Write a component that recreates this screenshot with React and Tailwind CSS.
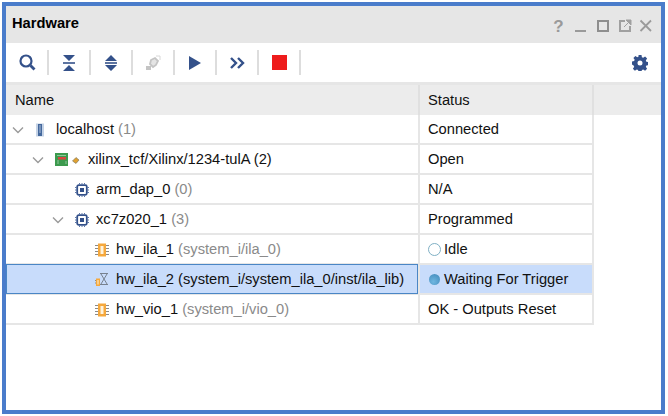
import React from 'react';

const NAVY = '#34518a';

function Chevron() {
  return (
    <svg width="12" height="8" viewBox="0 0 12 8" className="shrink-0">
      <path d="M1 1.500 L6 6.500 L11 1.500" fill="none" stroke="#9a9a9a" strokeWidth="1.400" />
    </svg>
  );
}

function HostIcon() {
  return (
    <svg width="10" height="14" viewBox="0 0 10 14" className="shrink-0">
      <rect x="1" y="0.500" width="8" height="13" fill="#c5d3e6" />
      <rect x="3" y="1" width="4" height="12" fill="#44689c" />
      <path d="M4 3h2M4 5h2M4 7h2M4 9h2" stroke="#c5d3e6" strokeWidth="0.800" />
    </svg>
  );
}

function BoardIcon() {
  return (
    <svg width="26" height="14" viewBox="0 0 26 14" className="shrink-0">
      <rect x="0" y="0" width="13" height="13" fill="#3c9a4e" />
      <path d="M2 2.500h9M11 8v3M3 7v4" fill="none" stroke="#8fc79a" strokeWidth="1" />
      <rect x="3" y="4" width="8" height="2.500" fill="#d8453f" />
      <path d="M21 4.500 L24 7 L21 10.500 L17.500 8 Z" fill="#e0a030" stroke="#6f6f5a" strokeWidth="0.600" />
    </svg>
  );
}

function ChipIcon() {
  return (
    <svg width="14" height="14" viewBox="0 0 14 14" className="shrink-0">
      <rect x="2.200" y="2.200" width="9.600" height="9.600" rx="1.500" fill="none" stroke="#34518a" strokeWidth="1.800" />
      <rect x="5" y="5" width="4" height="4" fill="#34518a" />
      <path d="M4.500 0v2M7 0v2M9.500 0v2M4.500 12v2M7 12v2M9.500 12v2M0 4.500h2M0 7h2M0 9.500h2M12 4.500h2M12 7h2M12 9.500h2" stroke="#5f78a8" strokeWidth="1" />
    </svg>
  );
}

function IlaIcon() {
  return (
    <svg width="14" height="14" viewBox="0 0 14 14" className="shrink-0">
      <path d="M0 2.500h3M0 5.500h3M0 8.500h3M0 11.500h3M11 2.500h3M11 5.500h3M11 8.500h3M11 11.500h3" stroke="#8a8a8a" strokeWidth="1" />
      <rect x="3" y="0.500" width="8" height="13" fill="#f5a83c" />
      <rect x="5.500" y="3" width="3" height="8" fill="#fff3dc" />
    </svg>
  );
}

function HourglassIcon() {
  return (
    <svg width="14" height="15" viewBox="0 0 14 15" className="shrink-0">
      <path d="M5 1.500h8M5 12.500h8M6 2l6 10M12 2L6 12" fill="none" stroke="#77818f" strokeWidth="1" />
      <path d="M0 8.500h1M0 11h1" stroke="#8a8a8a" />
      <rect x="1" y="6.500" width="4" height="7.500" fill="#f5a83c" />
      <rect x="2.500" y="8" width="1" height="4.500" fill="#fff3dc" />
    </svg>
  );
}

function Row({ indent, open, icon, name, note, noteDark, status, statusIcon, selected }) {
  return (
    <div className={`flex w-[588px] h-[30px] border-b-2 border-[#e6e6e6] ${selected ? 'bg-[#c8dcfb]' : ''}`}>
      <div
        className={`w-[412px] shrink-0 flex items-center pt-px ${selected ? 'border border-[#4a86c5] -mt-px h-[30px]' : ''}`}
        style={{ paddingLeft: selected ? indent - 1 : indent }}
      >
        <div className="w-[20px] shrink-0 flex items-center">{open && <Chevron />}</div>
        <div className="w-[24px] shrink-0 flex items-center pl-[3px]">{icon}</div>
        <span className="whitespace-nowrap">
          {name}
          {note && <span className={noteDark ? '' : 'text-[#8a8a8a]'}> {note}</span>}
        </span>
      </div>
      <div className="w-[176px] shrink-0 flex items-center gap-[3px] pl-[8px] pt-px border-x-2 border-[#e6e6e6] whitespace-nowrap">
        {statusIcon}
        {status}
      </div>
    </div>
  );
}

function Sep() {
  return <div className="w-[2px] h-[25px] bg-[#dddddd] shrink-0" />;
}

function ToolButton({ children }) {
  return <div className="w-[40px] h-[25px] flex items-center justify-center shrink-0">{children}</div>;
}

export default function App() {
  return (
    <div className="bg-white w-[668px] h-[416px] pt-[2px] pl-[2px] font-['Liberation_Sans',Arial,sans-serif] text-[14.7px] text-[#111111]">
      <div className="w-[663px] h-[412px] border-4 border-[#4a7ccb] bg-white flex flex-col overflow-hidden">
        <div className="h-[37px] bg-[#e6e6e6] flex items-center justify-between pl-[6px] pr-[8px] shrink-0">
          <span className="font-bold text-[14.7px] text-black -mt-[2px]">Hardware</span>
          <div className="flex items-center gap-[7px] mt-[3px]">
            <span className="font-bold text-[17px] leading-none text-[#9a9a9a] w-[15px] text-center">?</span>
            <svg width="15" height="14" viewBox="0 0 15 14"><path d="M2 12h11" stroke="#9a9a9a" strokeWidth="2" /></svg>
            <svg width="15" height="14" viewBox="0 0 15 14"><rect x="3" y="2" width="10" height="10" fill="none" stroke="#8e8e8e" strokeWidth="2" /></svg>
            <svg width="15" height="14" viewBox="0 0 15 14"><path d="M8 2H3v10h10V7" fill="none" stroke="#a0a0a0" strokeWidth="2" /><path d="M9 1h5v5z M7 8l4-4" fill="#a0a0a0" stroke="#a0a0a0" /></svg>
            <svg width="14" height="14" viewBox="0 0 14 14"><path d="M1.500 1.500l10.500 10.500M12 1.500L1.500 12" stroke="#9a9a9a" strokeWidth="1.800" /></svg>
          </div>
        </div>

        <div className="h-[39px] flex items-center pl-px pr-[13px] shrink-0">
          <ToolButton>
            <svg width="17" height="17" viewBox="0 0 17 17">
              <circle cx="7" cy="7" r="5.500" fill="none" stroke={NAVY} strokeWidth="2.200" />
              <path d="M11.500 11.500l4 4" stroke={NAVY} strokeWidth="2.800" />
            </svg>
          </ToolButton>
          <Sep />
          <ToolButton>
            <svg width="14" height="16" viewBox="0 0 14 16">
              <path d="M1 0h12L7 6z M1 16h12L7 10z" fill={NAVY} />
              <path d="M1 8h12" stroke={NAVY} strokeWidth="1.600" />
            </svg>
          </ToolButton>
          <Sep />
          <ToolButton>
            <svg width="14" height="16" viewBox="0 0 14 16">
              <path d="M7 0l6 6H1z M7 16l-6-6h12z" fill={NAVY} />
              <path d="M1 8h12" stroke={NAVY} strokeWidth="1.600" />
            </svg>
          </ToolButton>
          <Sep />
          <ToolButton>
            <svg width="16" height="16" viewBox="0 0 16 16">
              <path d="M6 5l4-2 3 3-2 4-3 2-3-3z" fill="#e4e4e4" stroke="#c4c4c4" strokeWidth="1.800" />
              <path d="M11 1h4v4" fill="none" stroke="#d8d8d8" strokeWidth="1" />
              <path d="M1 11h5v4H1z" fill="#c4c4c4" />
            </svg>
          </ToolButton>
          <Sep />
          <ToolButton>
            <svg width="12" height="14" viewBox="0 0 12 14"><path d="M0 0l12 7-12 7z" fill={NAVY} /></svg>
          </ToolButton>
          <Sep />
          <ToolButton>
            <svg width="15" height="12" viewBox="0 0 15 12">
              <path d="M1 1l5 5-5 5M8 1l5 5-5 5" fill="none" stroke={NAVY} strokeWidth="2.400" />
            </svg>
          </ToolButton>
          <Sep />
          <ToolButton>
            <div className="w-[15px] h-[15px] bg-[#ee1c1c]" />
          </ToolButton>
          <Sep />
          <div className="ml-auto">
            <svg width="16" height="16" viewBox="0 0 16 16">
              <path
                fillRule="evenodd"
                d="M6.500 0h3l.4 2.200 1.300.6 1.900-1.300 2 2-1.300 1.900.6 1.300 2.100.4v3l-2.100.4-.6 1.300 1.300 1.900-2 2-1.900-1.300-1.300.6-.4 2.100h-3l-.4-2.100-1.300-.6-1.900 1.300-2-2 1.300-1.900-.6-1.300L0 9.500v-3l2.100-.4.6-1.300L1.400 2.900l2-2 1.900 1.300 1.300-.6zM8 5.500a2.500 2.500 0 1 0 0 5 2.500 2.500 0 0 0 0-5z"
                fill={NAVY}
              />
            </svg>
          </div>
        </div>

        <div className="h-[33px] bg-[#ececec] border-t-[3px] border-[#e6e6e6] flex shrink-0">
          <div className="w-[412px] flex items-center pl-[9px] pt-px">Name</div>
          <div className="w-[176px] flex items-center pl-[8px] pt-px border-x-2 border-[#e0e0e0]">Status</div>
        </div>

        <div className="flex-1">
          <Row indent={6} open icon={<HostIcon />} name="localhost" note="(1)" status="Connected" />
          <Row indent={26} open icon={<BoardIcon />} name={<span className="ml-[12px]">xilinx_tcf/Xilinx/1234-tulA</span>} note="(2)" noteDark status="Open" />
          <Row indent={46} icon={<ChipIcon />} name="arm_dap_0" note="(0)" status="N/A" />
          <Row indent={46} open icon={<ChipIcon />} name="xc7z020_1" note="(3)" status="Programmed" />
          <Row
            indent={66}
            icon={<IlaIcon />}
            name="hw_ila_1"
            note="(system_i/ila_0)"
            status="Idle"
            statusIcon={<div className="w-[13px] h-[13px] rounded-full border border-[#7fb0c4] bg-white shrink-0" />}
          />
          <Row
            indent={66}
            selected
            icon={<HourglassIcon />}
            name="hw_ila_2"
            note="(system_i/system_ila_0/inst/ila_lib)"
            noteDark
            status="Waiting For Trigger"
            statusIcon={<div className="w-[11px] h-[11px] mx-px rounded-full bg-[radial-gradient(circle_at_40%_70%,#6fb6e0,#3f87b8)] shrink-0" />}
          />
          <Row indent={66} icon={<IlaIcon />} name="hw_vio_1" note="(system_i/vio_0)" status="OK - Outputs Reset" />
        </div>
      </div>
    </div>
  );
}
